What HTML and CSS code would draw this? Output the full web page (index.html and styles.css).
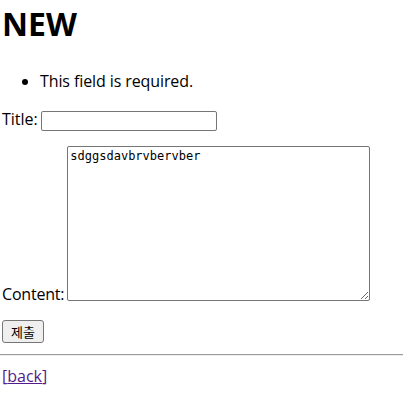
FILE: index.html
```html
<!DOCTYPE html>
<html lang="ko">
<head>
<meta charset="utf-8">
<title>NEW</title>
<link rel="stylesheet" href="styles.css">
</head>
<body>
<h1 class="title">NEW</h1>
<form class="post-form">
<ul class="errorlist"><li>This field is required.</li></ul>
<p class="field field-title"><label for="id_title">Title:</label> <input type="text" id="id_title" class="text-input"></p>
<p class="field field-content"><label for="id_content" class="content-label">Content:</label> <textarea id="id_content" class="text-area">sdggsdavbrvbervber</textarea></p>
<button type="submit" class="submit">제출</button>
</form>
<hr class="rule">
<p class="back">[<a href="#" class="back-link">back</a>]</p>
</body>
</html>
```

FILE: styles.css
```css
html, body {
  margin: 0;
  padding: 0;
  background: #fff;
}
body {
  font-family: "Open Sans", "Noto Sans CJK KR", sans-serif;
  font-size: 16px;
  line-height: 21px;
  color: #000;
}
.title {
  font-size: 32px;
  font-weight: 700;
  line-height: 40px;
  margin: 4px 0 0 2px;
}
.errorlist {
  margin: 27px 0 0 0;
  padding-left: 40px;
  letter-spacing: -0.1px;
}
.field {
  margin: 0;
}
.field-title {
  margin-top: 17px;
  display: flex;
  align-items: flex-end;
  gap: 3px;
  padding-left: 2px;
}
.field-content {
  margin-top: 16px;
  display: flex;
  align-items: flex-end;
  gap: 3px;
  padding-left: 2px;
}
.content-label {
  letter-spacing: -0.2px;
  margin-bottom: -4px;
}
.text-input {
  width: 176px;
  height: 20px;
  box-sizing: border-box;
  border: 1px solid #767676;
  border-radius: 2px;
  padding: 1px 2px;
  margin: 0 0 -1px 0;
  font: 13px "DejaVu Sans Mono", monospace;
}
.text-area {
  width: 303px;
  height: 155px;
  box-sizing: border-box;
  border: 1px solid #767676;
  border-radius: 2px;
  padding: 2px;
  margin: 0;
  font: 12px/15px "DejaVu Sans Mono", "Liberation Mono", monospace;
  resize: both;
}
.submit {
  margin: 19px 0 0 2px;
  height: 23px;
  width: 42px;
  padding: 0;
  font: 13px "Noto Sans CJK KR", sans-serif;
  background: #efefef;
  border: 1px solid #767676;
  border-radius: 3px;
  color: #000;
}
.rule {
  margin: 11px 0 0 0;
  border: 0;
  border-top: 1px solid #9a9a9a;
  border-bottom: 1px solid #eee;
}
.back {
  margin: 10px 0 0 2px;
  color: #551a8b;
}
.back-link {
  color: #551a8b;
}
```
